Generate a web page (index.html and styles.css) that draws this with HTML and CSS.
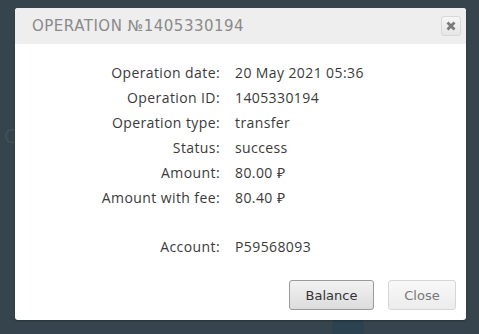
FILE: index.html
```html
<!DOCTYPE html>
<html>
<head>
<link rel="stylesheet" href="styles.css">
</head>
<body>
    <div class="page">
        <span class="ghost-letter">C</span>
        <div class="ghost-circle"></div>
    </div>

    <div class="dialog">
        <div class="dialog-header">
            <h1 class="dialog-title">Operation №1405330194</h1>
            <button class="close-x" title="Close">
                <svg width="10" height="10" viewBox="0 0 10 10">
                    <path d="M1.5 1.5 L8.5 8.5 M8.5 1.5 L1.5 8.5" stroke="#7a7a7a" stroke-width="2.8" stroke-linecap="butt"/>
                </svg>
            </button>
        </div>

        <div class="dialog-body">
            <div class="info">
                <div class="label">Operation date:</div>
                <div class="value">20 May 2021 05:36</div>

                <div class="label">Operation ID:</div>
                <div class="value">1405330194</div>

                <div class="label">Operation type:</div>
                <div class="value">transfer</div>

                <div class="label">Status:</div>
                <div class="value">success</div>

                <div class="label">Amount:</div>
                <div class="value">80.00 ₽</div>

                <div class="label">Amount with fee:</div>
                <div class="value">80.40 ₽</div>

                <div class="label spacer"></div>
                <div class="value spacer"></div>

                <div class="label">Account:</div>
                <div class="value">P59568093</div>
            </div>
        </div>

        <div class="dialog-footer">
            <button class="btn btn-primary">Balance</button>
            <button class="btn btn-light">Close</button>
        </div>
    </div>
</body>
</html>
```

FILE: styles.css
```css
body {
    margin: 0;
    width: 479px;
    height: 334px;
    overflow: hidden;
    background-color: #36454d;
    font-family: "Open Sans", Arial, sans-serif;
}

.page {
    position: relative;
    height: 334px;
}

.ghost-letter {
    position: absolute;
    left: 4px;
    top: 122px;
    font-size: 20px;
    color: #3f5058;
}

.ghost-circle {
    position: absolute;
    left: 332px;
    top: 312px;
    width: 32px;
    height: 32px;
    border-radius: 50%;
    background-color: #2b4250;
}

.dialog {
    position: absolute;
    left: 15px;
    top: 8px;
    width: 451px;
    height: 312px;
    background-color: #ffffff;
    border-radius: 3px;
    box-shadow: 0 1px 2px rgba(0, 0, 0, 0.3);
    display: flex;
    flex-direction: column;
}

.dialog-header {
    height: 36px;
    background-color: #eeeeee;
    border-radius: 3px 3px 0 0;
    display: flex;
    align-items: center;
    justify-content: space-between;
    padding: 0 5px 0 17px;
}

.dialog-title {
    margin: 0;
    font-family: "DejaVu Sans", sans-serif;
    font-weight: normal;
    font-size: 15px;
    letter-spacing: 0.5px;
    text-transform: uppercase;
    color: #8a8a8a;
}

.close-x {
    width: 20px;
    height: 20px;
    padding: 0;
    border: 1px solid #d8d8d8;
    border-radius: 3px;
    background: linear-gradient(#f6f6f6, #e6e6e6);
    display: flex;
    align-items: center;
    justify-content: center;
}

.dialog-body {
    flex: 1;
    padding-top: 16px;
}

.info {
    display: grid;
    grid-template-columns: 205px 1fr;
    column-gap: 15px;
    font-size: 14px;
    letter-spacing: 0.4px;
    line-height: 25px;
    color: #3a3a3a;
}

.label {
    text-align: right;
}

.spacer {
    height: 24px;
}

.dialog-footer {
    display: flex;
    justify-content: flex-end;
    gap: 14px;
    padding: 0 10px 10px 0;
}

.btn {
    height: 30px;
    padding: 0 12px;
    font-family: "DejaVu Sans", Verdana, sans-serif;
    font-size: 13px;
    border-radius: 3px;
    cursor: pointer;
}

.btn-primary {
    width: 85px;
    color: #333333;
    border: 1px solid #9a9a9a;
    background: linear-gradient(#f2f2f2, #dcdcdc);
}

.btn-light {
    width: 68px;
    color: #777777;
    border: 1px solid #d6d6d6;
    background: linear-gradient(#f8f8f8, #ececec);
}
```
